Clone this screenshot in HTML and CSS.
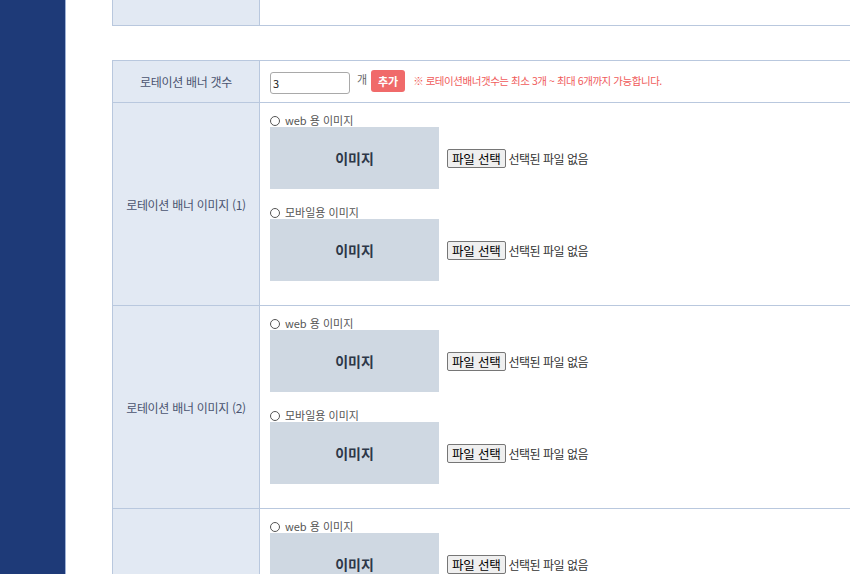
FILE: index.html
```html
<!DOCTYPE html>
<html lang="ko">
<head>
<meta charset="utf-8">
<link rel="stylesheet" href="styles.css">
</head>
<body>
<div class="layout">
  <aside class="sidebar"></aside>
  <main class="main">
    <table class="tbl tbl-top">
      <tr><th class="lbl"></th><td class="val"></td></tr>
    </table>

    <table class="tbl tbl-main">
      <tr class="row-count">
        <th class="lbl">로테이션 배너 갯수</th>
        <td class="val">
          <div class="count-line">
            <input class="count-input" type="text" value="3">
            <span class="unit">개</span>
            <button class="btn-add" type="button">추가</button>
            <span class="notice">※ 로테이션배너갯수는 최소 3개 ~ 최대 6개까지 가능합니다.</span>
          </div>
        </td>
      </tr>
      <tr>
        <th class="lbl">로테이션 배너 이미지 (1)</th>
        <td class="val imgs">
          <div class="group">
            <div class="radio-line"><span class="radio"></span>web 용 이미지</div>
            <div class="img-line"><div class="ph">이미지</div><span class="file-btn">파일 선택</span><span class="file-txt">선택된 파일 없음</span></div>
          </div>
          <div class="group">
            <div class="radio-line"><span class="radio"></span>모바일용 이미지</div>
            <div class="img-line"><div class="ph">이미지</div><span class="file-btn">파일 선택</span><span class="file-txt">선택된 파일 없음</span></div>
          </div>
        </td>
      </tr>
      <tr>
        <th class="lbl">로테이션 배너 이미지 (2)</th>
        <td class="val imgs">
          <div class="group">
            <div class="radio-line"><span class="radio"></span>web 용 이미지</div>
            <div class="img-line"><div class="ph">이미지</div><span class="file-btn">파일 선택</span><span class="file-txt">선택된 파일 없음</span></div>
          </div>
          <div class="group">
            <div class="radio-line"><span class="radio"></span>모바일용 이미지</div>
            <div class="img-line"><div class="ph">이미지</div><span class="file-btn">파일 선택</span><span class="file-txt">선택된 파일 없음</span></div>
          </div>
        </td>
      </tr>
      <tr>
        <th class="lbl">로테이션 배너 이미지 (3)</th>
        <td class="val imgs">
          <div class="group">
            <div class="radio-line"><span class="radio"></span>web 용 이미지</div>
            <div class="img-line"><div class="ph">이미지</div><span class="file-btn">파일 선택</span><span class="file-txt">선택된 파일 없음</span></div>
          </div>
          <div class="group">
            <div class="radio-line"><span class="radio"></span>모바일용 이미지</div>
            <div class="img-line"><div class="ph">이미지</div><span class="file-btn">파일 선택</span><span class="file-txt">선택된 파일 없음</span></div>
          </div>
        </td>
      </tr>
    </table>
  </main>
</div>
</body>
</html>
```
FILE: styles.css
```css
html, body {
  margin: 0;
  padding: 0;
  height: 574px;
  overflow: hidden;
  background: #fff;
  font-family: "Noto Sans CJK KR", "Noto Sans", sans-serif;
}
.layout {
  display: flex;
  height: 574px;
}
.sidebar {
  width: 65px;
  flex: none;
  background: #1e3a78;
  border-right: 1px solid #9fb2d6;
}
.main {
  flex: none;
  padding-left: 46px;
}
.tbl {
  border-collapse: collapse;
  width: 1000px;
  table-layout: fixed;
}
.tbl th, .tbl td {
  border: 1px solid #b9c8de;
  padding: 0;
}
.lbl {
  width: 146px;
  background: #e2e9f3;
  color: #4a5470;
  font-size: 12px;
  font-weight: normal;
  text-align: center;
  vertical-align: middle;
  letter-spacing: -0.3px;
}
.val {
  background: #fff;
  vertical-align: top;
}
.tbl-top th, .tbl-top td {
  border-top: none;
  height: 25px;
}
.tbl-main {
  margin-top: 34px;
}
.row-count th, .row-count td {
  height: 41px;
}
.count-line {
  display: flex;
  align-items: center;
  padding: 10px 0 0 10px;
  height: 22px;
}
.count-input {
  box-sizing: border-box;
  width: 80px;
  height: 22px;
  border: 1px solid #a9a9a9;
  border-radius: 3px;
  padding: 0 2px;
  font-size: 11px;
  font-family: "Noto Sans CJK KR", "Noto Sans", sans-serif;
  color: #222;
  margin: 1px 0 0 0;
}
.unit {
  font-size: 11px;
  color: #666;
  margin-left: 7px;
  margin-top: -6px;
}
.btn-add {
  width: 34px;
  height: 22px;
  margin-left: 4px;
  margin-top: -3px;
  border: none;
  border-radius: 3px;
  background: #f06a6a;
  color: #fff;
  font-size: 11px;
  font-weight: bold;
  font-family: "Noto Sans CJK KR", "Noto Sans", sans-serif;
  padding: 0;
}
.notice {
  font-size: 10.5px;
  color: #f05b5b;
  margin-left: 8px;
  margin-top: -3px;
  letter-spacing: -0.45px;
}
.imgs {
  padding: 11px 0 7px 10px !important;
}
.group {
  margin-bottom: 17px;
}
.radio-line {
  display: flex;
  align-items: center;
  height: 13px;
  font-size: 11px;
  line-height: 13px;
  color: #555;
}
.radio {
  box-sizing: border-box;
  width: 10px;
  height: 10px;
  border: 1px solid #555;
  border-radius: 50%;
  margin: 0 5px 0 0;
}
.img-line {
  display: flex;
  align-items: center;
}
.ph {
  width: 169px;
  height: 62px;
  background: #cfd8e2;
  color: #2d3748;
  font-size: 14px;
  font-weight: 600;
  display: flex;
  align-items: center;
  justify-content: center;
}
.file-btn {
  box-sizing: border-box;
  height: 19px;
  margin-left: 8px;
  padding: 0 4px;
  border: 1px solid #767676;
  border-radius: 2px;
  background: #efefef;
  color: #000;
  font-size: 12.5px;
  line-height: 17px;
  letter-spacing: -0.2px;
}
.file-txt {
  margin-left: 3px;
  font-size: 12px;
  color: #333;
  letter-spacing: -0.5px;
}
```
